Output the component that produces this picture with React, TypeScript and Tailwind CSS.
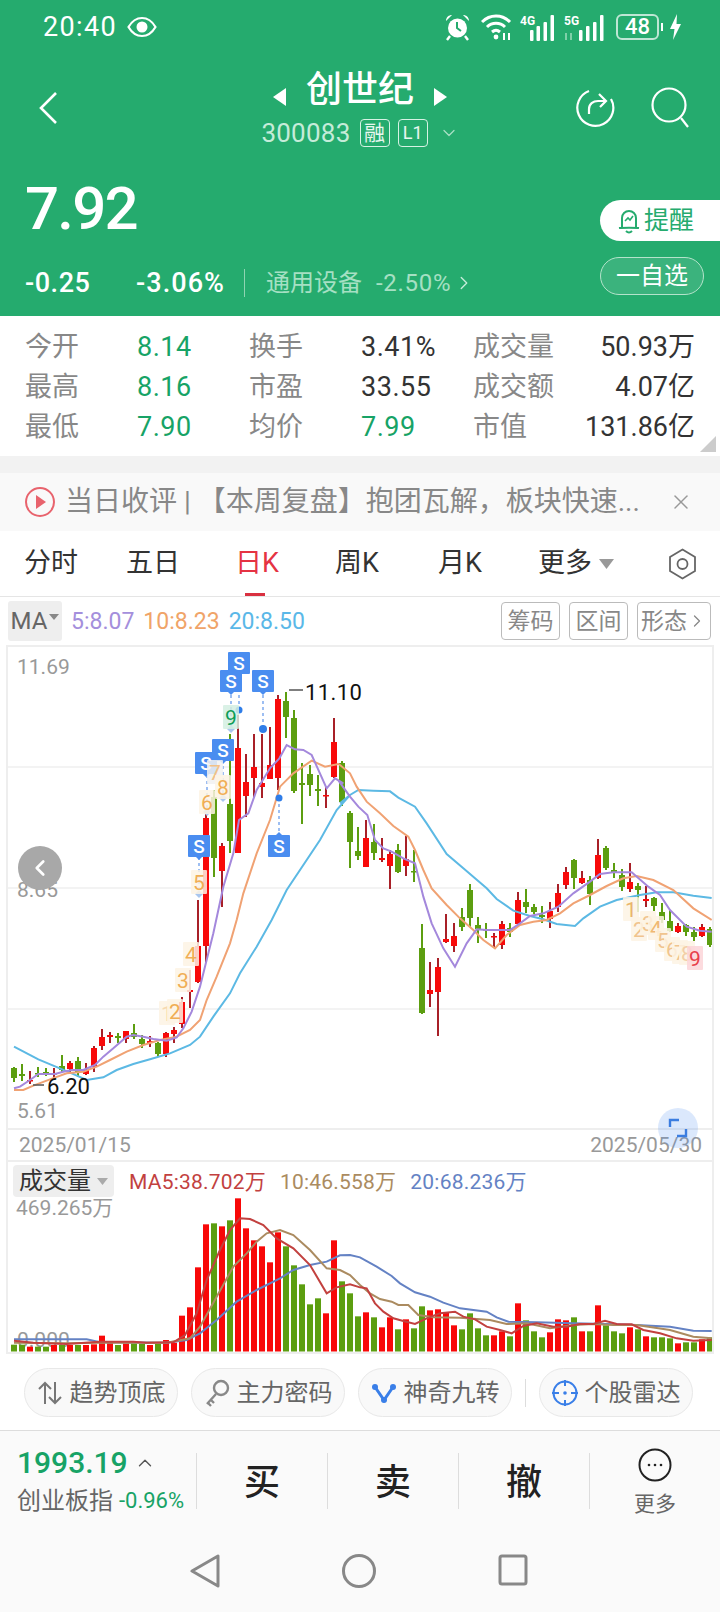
import { ChevronLeft, ChevronRight, ChevronDown, ChevronUp, X } from 'lucide-react'

type Pt = [number, number]

// bodyTop, bodyBottom, wickTop, wickBottom, r|g (page y, one candle every 8px)
type Candle = [number, number, number, number, 'r' | 'g']

const candles: Candle[] = [
  [1068, 1078, 1067, 1082, 'g'], [1074, 1076, 1064, 1081, 'g'], [1080, 1081, 1071, 1084, 'r'], [1073, 1074, 1067, 1077, 'g'],
  [1072, 1073, 1068, 1076, 'g'], [1073, 1074, 1068, 1078, 'r'], [1066, 1070, 1055, 1072, 'g'], [1063, 1069, 1061, 1073, 'r'],
  [1061, 1073, 1057, 1077, 'g'], [1070, 1074, 1063, 1075, 'r'], [1048, 1067, 1046, 1072, 'r'], [1037, 1046, 1029, 1050, 'r'],
  [1035, 1037, 1032, 1043, 'r'], [1036, 1038, 1033, 1043, 'g'], [1031, 1039, 1031, 1043, 'r'], [1033, 1037, 1024, 1039, 'g'],
  [1039, 1044, 1035, 1048, 'g'], [1041, 1043, 1036, 1047, 'r'], [1043, 1054, 1042, 1057, 'g'], [1033, 1054, 1032, 1057, 'r'],
  [1030, 1034, 1027, 1043, 'r'], [1002, 1024, 997, 1028, 'r'], [990, 992, 970, 1008, 'r'], [946, 982, 900, 983, 'r'],
  [818, 946, 812, 962, 'r'], [797, 858, 790, 877, 'g'], [846, 871, 843, 907, 'r'], [804, 841, 734, 853, 'g'],
  [748, 853, 715, 853, 'r'], [782, 796, 754, 817, 'r'], [767, 778, 734, 797, 'r'], [783, 787, 734, 798, 'r'],
  [765, 779, 727, 779, 'r'], [699, 778, 695, 790, 'r'], [701, 717, 692, 738, 'g'], [718, 791, 710, 793, 'g'],
  [783, 785, 763, 824, 'g'], [774, 785, 765, 796, 'g'], [789, 791, 775, 806, 'g'], [795, 796, 787, 808, 'r'],
  [742, 777, 718, 778, 'r'], [763, 802, 761, 806, 'g'], [813, 842, 811, 868, 'g'], [851, 856, 827, 860, 'g'],
  [838, 867, 820, 867, 'r'], [842, 853, 824, 860, 'g'], [858, 860, 838, 862, 'r'], [854, 866, 850, 889, 'r'],
  [850, 872, 844, 873, 'g'], [859, 866, 836, 876, 'r'], [871, 872, 850, 882, 'g'], [948, 1013, 924, 1014, 'g'],
  [990, 994, 962, 1007, 'r'], [967, 992, 958, 1036, 'r'], [939, 942, 914, 943, 'r'], [936, 946, 923, 952, 'r'],
  [917, 927, 908, 931, 'g'], [890, 918, 884, 927, 'g'], [925, 929, 917, 943, 'g'], [929, 930, 923, 938, 'g'],
  [936, 937, 933, 948, 'r'], [924, 945, 921, 949, 'r'], [928, 932, 923, 937, 'g'], [900, 924, 892, 925, 'r'],
  [902, 907, 889, 913, 'g'], [907, 912, 904, 914, 'g'], [915, 917, 906, 923, 'g'], [911, 919, 902, 928, 'r'],
  [893, 907, 884, 912, 'r'], [872, 885, 867, 889, 'r'], [860, 878, 859, 889, 'g'], [878, 883, 871, 884, 'r'],
  [880, 894, 876, 905, 'g'], [855, 878, 839, 879, 'r'], [848, 868, 846, 870, 'g'], [870, 872, 863, 878, 'g'],
  [875, 887, 869, 891, 'g'], [882, 889, 863, 892, 'r'], [886, 890, 883, 912, 'g'], [899, 901, 886, 907, 'r'],
  [898, 906, 897, 911, 'g'], [912, 920, 903, 923, 'g'], [921, 931, 910, 932, 'g'], [926, 932, 923, 933, 'r'],
  [925, 932, 924, 936, 'g'], [932, 937, 927, 941, 'g'], [927, 936, 924, 937, 'r'], [929, 945, 927, 947, 'g'],
]

// bar tops, as page y
const volumes: [number, 'r' | 'g'][] = (
  [
    [584, 'g'], [584, 'g'], [590, 'r'], [590, 'g'], [590, 'g'], [585, 'r'], [585, 'g'], [585, 'r'], [585, 'g'], [585, 'r'], [583, 'r'],
    [557, 'r'], [578, 'r'], [585, 'g'], [580, 'r'], [580, 'g'], [582, 'g'], [585, 'r'], [582, 'g'], [570, 'r'], [578, 'r'], [497, 'r'],
    [472, 'r'], [352, 'r'], [223, 'r'], [220, 'g'], [229, 'r'], [211, 'g'], [145, 'r'], [235, 'r'], [271, 'r'], [289, 'r'], [337, 'r'],
    [247, 'r'], [289, 'g'], [346, 'g'], [403, 'g'], [463, 'g'], [445, 'g'], [490, 'r'], [271, 'r'], [394, 'g'], [430, 'g'], [499, 'g'],
    [487, 'r'], [502, 'g'], [532, 'r'], [502, 'r'], [538, 'g'], [508, 'r'], [535, 'g'], [469, 'g'], [481, 'r'], [478, 'r'], [487, 'r'],
    [526, 'r'], [538, 'g'], [490, 'g'], [535, 'g'], [556, 'g'], [556, 'r'], [544, 'r'], [559, 'g'], [460, 'r'], [511, 'g'], [544, 'g'],
    [562, 'g'], [547, 'r'], [508, 'r'], [511, 'r'], [502, 'g'], [544, 'r'], [544, 'g'], [466, 'r'], [526, 'g'], [544, 'g'], [550, 'g'],
    [532, 'r'], [538, 'g'], [559, 'r'], [562, 'g'], [562, 'g'], [565, 'g'], [580, 'r'], [577, 'g'], [577, 'g'], [568, 'r'], [562, 'g'],
  ] as [number, 'r' | 'g'][]
).map(([v, c]) => [1150 + v / 3, c])

// crops of the picture were 3x, these bring the traced points back to page coordinates
const a = (ox: number, oy: number, pts: Pt[]) => pts.map(([x, y]) => `${ox + x / 3},${oy + y / 3}`).join(' ')

const ma5 = [
  a(0, 920, [[42, 505], [60, 500], [90, 480], [115, 462], [140, 462], [165, 462], [190, 455], [215, 450], [250, 450], [285, 435], [310, 410], [340, 385], [380, 350], [400, 345], [430, 350], [460, 357], [500, 362], [530, 352], [550, 325], [575, 275], [600, 200], [625, 100]]),
  a(0, 640, [[640, 880], [670, 740], [700, 640], [717, 540], [745, 520], [770, 450], [810, 385], [838, 355], [860, 315], [885, 328], [910, 330], [935, 345], [980, 445], [1005, 415], [1030, 430]]),
  a(340, 700, [[0, 248], [30, 290], [55, 320], [82, 345], [105, 420], [130, 445], [155, 455], [190, 475], [225, 490], [250, 590], [275, 670], [310, 745], [345, 800], [380, 730], [410, 688], [440, 690], [470, 690], [510, 690], [540, 670], [570, 648], [610, 640], [655, 620], [700, 580], [750, 545], [780, 522], [820, 517], [875, 517], [925, 560], [960, 585], [990, 630], [1040, 680], [1080, 692], [1115, 695]]),
].join(' ')
const ma10 = [
  a(0, 920, [[42, 510], [70, 510], [100, 497], [150, 478], [200, 460], [250, 455], [290, 440], [330, 420], [380, 395], [430, 375], [480, 360], [530, 350], [570, 330], [600, 300], [620, 240], [650, 170], [690, 70], [710, 0]]),
  a(0, 640, [[730, 760], [770, 640], [810, 540], [840, 440], [880, 400], [935, 362], [975, 380], [1015, 372]]),
  a(340, 700, [[0, 195], [30, 220], [50, 260], [80, 305], [120, 340], [160, 378], [205, 410], [225, 450], [250, 510], [275, 565], [320, 615], [360, 655], [400, 690], [430, 720], [465, 745], [500, 705], [540, 675], [580, 665], [620, 660], [660, 640], [700, 610], [750, 585], [800, 558], [850, 535], [890, 528], [940, 540], [1000, 570], [1060, 625], [1115, 660]]),
].join(' ')
const ma20 = [
  a(0, 920, [[42, 380], [115, 418], [210, 458], [260, 480], [310, 472], [350, 450], [400, 432], [450, 418], [510, 400], [570, 375], [600, 350], [640, 290], [690, 220], [720, 160], [770, 80], [815, 0]]),
  a(0, 640, [[860, 750], [960, 600], [1010, 510], [1050, 465]]),
  a(340, 700, [[0, 310], [30, 285], [55, 270], [100, 272], [150, 274], [175, 293], [225, 320], [260, 370], [320, 462], [370, 505], [440, 565], [470, 597], [520, 632], [570, 648], [610, 658], [650, 672], [705, 678], [730, 655], [780, 620], [830, 600], [900, 585], [950, 577], [1000, 577], [1060, 587], [1115, 594]]),
].join(' ')

const volMa5 = [
  a(0, 1150, [[42, 572], [100, 578], [200, 582], [300, 575], [400, 575], [440, 578], [520, 577], [555, 555], [590, 490], [620, 390], [660, 300], [690, 240], [720, 205], [750, 207], [790, 225], [830, 265], [880, 295], [930, 345], [980, 430], [1010, 412], [1050, 403]]),
  a(360, 1150, [[0, 412], [20, 415], [45, 460], [70, 485], [100, 505], [130, 513], [165, 522], [200, 505], [240, 490], [285, 485], [310, 500], [345, 508], [380, 530], [420, 540], [455, 550], [490, 528], [530, 520], [580, 530], [620, 530], [660, 522], [700, 522], [735, 512], [770, 522], [815, 523], [850, 540], [900, 550], [950, 565], [1000, 572], [1055, 570]]),
].join(' ')
const volMa10 = [
  a(0, 1150, [[42, 578], [200, 580], [300, 578], [500, 578], [570, 565], [600, 530], [650, 440], [700, 350], [740, 310], [770, 275], [800, 250], [840, 240], [880, 255], [930, 300], [980, 355], [1020, 360], [1050, 375]]),
  a(360, 1150, [[0, 405], [30, 430], [60, 447], [95, 455], [115, 465], [145, 465], [175, 495], [220, 502], [300, 503], [390, 510], [440, 522], [500, 520], [570, 535], [640, 525], [700, 522], [760, 525], [830, 525], [930, 540], [1000, 560], [1055, 565]]),
].join(' ')
const volMa20 = [
  a(0, 1150, [[42, 568], [260, 568], [300, 577], [500, 578], [560, 570], [600, 550], [650, 510], [710, 455], [770, 420], [840, 385], [880, 360], [930, 345], [980, 335], [1020, 316], [1050, 315]]),
  a(360, 1150, [[0, 322], [50, 350], [95, 378], [120, 400], [165, 427], [210, 440], [250, 458], [300, 475], [380, 485], [410, 502], [445, 515], [530, 517], [640, 520], [740, 522], [830, 525], [930, 530], [1000, 542], [1055, 543]]),
].join(' ')

const SBadge = ({ x, y, up }: { x: number; y: number; up?: boolean }) => (
  <g>
    <path
      d={up ? `M${x - 3} ${y - 11}L${x} ${y - 14}L${x + 3} ${y - 11}Z` : `M${x - 3} ${y + 11}L${x} ${y + 14}L${x + 3} ${y + 11}Z`}
      fill="#4a8df0"
    />
    <rect x={x - 11} y={y - 11} width={22} height={22} rx={1} fill="#4a8df0" />
    <text x={x} y={y + 6.5} textAnchor="middle" fontSize={19} fontWeight={500} fill="#fff">
      S
    </text>
  </g>
)

const Digit = ({ x, y, d, c = '#f0ae55', bg = '#fdf3e4' }: { x: number; y: number; d: string; c?: string; bg?: string }) => (
  <g>
    <rect x={x - 8} y={y - 12} width={16} height={24} rx={1} fill={bg} fillOpacity={0.85} />
    <text x={x} y={y + 8} textAnchor="middle" fontSize={21} fill={c}>
      {d}
    </text>
  </g>
)

const Diamond = ({ x, y }: { x: number; y: number }) => (
  <path d={`M${x - 4} ${y}L${x} ${y - 4}L${x + 4} ${y}L${x} ${y + 4}Z`} fill="#a9c6ee" />
)

const PriceChart = () => (
  <svg width={704} height={481} viewBox="8 647 704 481" className="block">
    {[767, 888, 1009].map((y) => (
      <line key={y} x1={8} x2={712} y1={y} y2={y} stroke="#f3f3f3" strokeWidth={2} />
    ))}
    <text x={17} y={674} fontSize={21} fill="#999">11.69</text>
    <text x={17} y={897} fontSize={21} fill="#999">8.65</text>
    <text x={17} y={1118} fontSize={21} fill="#999">5.61</text>

    {candles.map(([top, bottom, hi, lo, c], i) => {
      const x = 14 + 8 * i
      return (
        <g key={i}>
          <rect x={x - 1} y={hi} width={2} height={lo - hi} fill={c === 'r' ? '#a82028' : '#5c9e10'} />
          <rect x={x - 3} y={top} width={6} height={Math.max(bottom - top, 1.5)} fill={c === 'r' ? '#f80a0a' : '#5c9e10'} />
        </g>
      )
    })}

    <polyline points={ma20} fill="none" stroke="#5cb9e4" strokeWidth={2} />
    <polyline points={ma10} fill="none" stroke="#f0a273" strokeWidth={2} />
    <polyline points={ma5} fill="none" stroke="#a488dc" strokeWidth={2} />

    <line x1={289} x2={303} y1={690} y2={690} stroke="#555" strokeWidth={1.5} />
    <text x={305} y={700} fontSize={22} fill="#111" letterSpacing={0.4}>11.10</text>
    <line x1={33} x2={44} y1={1085} y2={1085} stroke="#555" strokeWidth={1.5} />
    <text x={47} y={1094} fontSize={22} fill="#111">6.20</text>

    {[[199, 857, 894], [207, 775, 812], [223, 760, 798], [231, 695, 729], [239, 677, 710], [263, 695, 729], [279, 798, 832]].map(([x, y1, y2]) => (
      <line key={x} x1={x} x2={x} y1={y1} y2={y2} stroke="#7ea9ee" strokeWidth={1.5} strokeDasharray="3 3" />
    ))}
    <Diamond x={199} y={894} />
    <Diamond x={207} y={812} />
    <Diamond x={223} y={798} />
    <Diamond x={231} y={729} />
    <circle cx={239} cy={710} r={3.5} fill="#2f7de8" />
    <circle cx={263} cy={729} r={4} fill="#2f7de8" />
    <circle cx={279} cy={798} r={3.5} fill="#2f7de8" />

    <Digit x={199} y={882} d="5" />
    <Digit x={207} y={802} d="6" />
    <SBadge x={206} y={763} />
    <SBadge x={223} y={750} />
    <Digit x={215} y={772} d="7" c="#f2c187" bg="#f1f1f1" />
    <Digit x={223} y={787} d="8" />
    <Digit x={231} y={717} d="9" c="#0f9d58" bg="#d4efe2" />
    <SBadge x={199} y={846} />
    <SBadge x={231} y={681} />
    <SBadge x={239} y={663} />
    <SBadge x={263} y={681} />
    <SBadge x={279} y={846} up />

    <Digit x={167} y={1013} d="1" c="#f7d9b0" />
    <Digit x={175} y={1011} d="2" />
    <Digit x={183} y={980} d="3" />
    <Digit x={191} y={954} d="4" />

    <Digit x={631} y={909} d="1" c="#e9b56c" />
    <Digit x={639} y={929} d="2" c="#f0c48e" />
    <Digit x={648} y={923} d="3" c="#f0c48e" />
    <Digit x={656} y={928} d="4" c="#f0b873" />
    <Digit x={663} y={940} d="5" c="#f0c48e" />
    <Digit x={672} y={949} d="6" c="#f0c48e" />
    <Digit x={680} y={952} d="7" c="#f0c48e" />
    <Digit x={687} y={953} d="8" c="#f3cfa6" />
    <Digit x={695} y={958} d="9" c="#e8404a" bg="#fcd5d8" />
  </svg>
)

const VolumeChart = () => (
  <svg width={704} height={190} viewBox="8 1162 704 190" className="block">
    <text x={17} y={1347} fontSize={21} fill="#999">0.000</text>
    {volumes.map(([top, c], i) => (
      <rect key={i} x={11 + 8 * i} y={top} width={6} height={1351.5 - top} fill={c === 'r' ? '#f80808' : '#5c9e10'} />
    ))}
    <polyline points={volMa20} fill="none" stroke="#6482c4" strokeWidth={2} />
    <polyline points={volMa10} fill="none" stroke="#ab8b60" strokeWidth={2} />
    <polyline points={volMa5} fill="none" stroke="#c2413f" strokeWidth={2} />
  </svg>
)

const stats = [
  ['今开', '8.14', '换手', '3.41%', '成交量', '50.93万'],
  ['最高', '8.16', '市盈', '33.55', '成交额', '4.07亿'],
  ['最低', '7.90', '均价', '7.99', '市值', '131.86亿'],
]

const Pill = ({ icon, label }: { icon: React.ReactNode; label: string }) => (
  <div className="flex h-[49px] w-[154px] items-center justify-center gap-[7px] rounded-full border border-[#e8e8e8] bg-[#f9f9f9] text-[24px] text-[#666]">
    {icon}
    <span>{label}</span>
  </div>
)

export default function App() {
  return (
    <div className="flex h-[1612px] w-[720px] flex-col overflow-hidden bg-white [font-family:Roboto,'Noto_Sans_CJK_SC',sans-serif]">
      <header className="flex h-[316px] flex-col bg-[#25ab6e] text-white">
        {/* status bar */}
        <div className="flex h-[54px] items-center justify-between pl-[43px] pr-[38px]">
          <div className="flex items-center gap-[10px]">
            <span className="text-[27px] tracking-[0.05em]">20:40</span>
            <svg width="30" height="22" viewBox="0 0 30 22" fill="none">
              <path d="M1.5 11C5 5 10 2 15 2s10 3 13.5 9C25 17 20 20 15 20S5 17 1.5 11Z" stroke="#fff" strokeWidth="2.2" />
              <circle cx="15" cy="11" r="5.5" fill="#fff" />
            </svg>
          </div>
          <div className="flex items-center">
            <svg width="27" height="28" viewBox="0 0 27 28" fill="#fff">
              <circle cx="13.5" cy="15" r="9.5" />
              <path d="M13 9v6l4 3" stroke="#25ab6e" strokeWidth="2" fill="none" />
              <path d="M2 8c0-4 3-6 6-6zM25 8c0-4-3-6-6-6z" />
              <path d="M6 23l-3 4M21 23l3 4" stroke="#fff" strokeWidth="2.4" />
            </svg>
            <svg className="ml-[10px]" width="32" height="28" viewBox="0 0 32 28" fill="none" stroke="#fff" strokeWidth="3">
              <path d="M1 9c8-8 20-8 28 0" />
              <path d="M6 14c5-5 13-5 18 0" />
              <path d="M11 19c3-2.500 5-2.500 8 0" />
              <circle cx="15" cy="24" r="2.400" fill="#fff" stroke="none" />
              <path d="M23 20v7M28 20v7" strokeWidth="2" />
            </svg>
            <svg className="ml-[7px]" width="38" height="28" viewBox="0 0 38 28" fill="#fff">
              <text x="0" y="12" fontSize="12" fontWeight="700">4G</text>
              <rect x="10" y="17" width="3.500" height="11" rx="1" />
              <rect x="16.500" y="13" width="3.500" height="15" rx="1" />
              <rect x="23.500" y="9" width="3.500" height="19" rx="1" />
              <rect x="30.500" y="2" width="3.500" height="26" rx="1" />
            </svg>
            <svg className="ml-[6px]" width="44" height="28" viewBox="0 0 44 28" fill="#fff">
              <text x="0" y="12" fontSize="12" fontWeight="700">5G</text>
              <path d="M2 20v7M7 20v7" stroke="#7fd0a8" strokeWidth="2" />
              <rect x="15" y="17" width="3.500" height="11" rx="1" />
              <rect x="22" y="13" width="3.500" height="15" rx="1" />
              <rect x="29" y="9" width="3.500" height="19" rx="1" />
              <rect x="36" y="2" width="3.500" height="26" rx="1" />
            </svg>
            <div className="ml-[8px] flex h-[26px] w-[43px] items-center justify-center rounded-[6px] border-2 border-white/70 text-[22px] font-medium leading-none">
              48
            </div>
            <div className="ml-[2px] h-[8px] w-[2px] bg-white" />
            <svg className="ml-[6px]" width="13" height="28" viewBox="0 0 13 28" fill="#fff">
              <path d="M8 1 1 16h4.500L4 27l8-16H7.500Z" />
            </svg>
          </div>
        </div>

        {/* name row */}
        <div className="flex h-[116px]">
          <div className="w-[170px] pl-[38px] pt-[37px]">
            <svg width="20" height="34" viewBox="0 0 20 34" fill="none" stroke="#fff" strokeWidth="2.600">
              <path d="M18 2 3 17l15 15" />
            </svg>
          </div>
          <div className="flex flex-1 flex-col items-center">
            <div className="mt-[16px] flex h-[40px] items-center gap-[20px]">
              <svg className="mt-[14px]" width="13" height="18" viewBox="0 0 13 18" fill="#fff">
                <path d="M13 0v18L0 9Z" />
              </svg>
              <span className="text-[36px] font-medium leading-[40px]">创世纪</span>
              <svg className="mt-[14px]" width="13" height="18" viewBox="0 0 13 18" fill="#fff">
                <path d="M0 0v18l13-9Z" />
              </svg>
            </div>
            <div className="mt-[8px] flex h-[30px] items-center text-[#c5ecd9]">
              <span className="text-[26px] leading-none tracking-[0.01em]">300083</span>
              <span className="ml-[9px] flex h-[28px] w-[30px] items-center justify-center rounded-[4px] border border-[#d6f2e4] text-[21px] leading-none text-white/90">融</span>
              <span className="ml-[8px] flex h-[28px] w-[30px] items-center justify-center rounded-[4px] border border-[#d6f2e4] text-[18px] leading-none text-white/90">L1</span>
              <ChevronDown className="ml-[11px]" size={20} strokeWidth={1.5} color="#a8e0c4" />
            </div>
          </div>
          <div className="flex w-[170px] items-start justify-end gap-[36px] pr-[29px] pt-[33px]">
            <svg width="40" height="42" viewBox="0 0 40 42" fill="none" stroke="#fff" strokeWidth="2.200">
              <path d="M14 4a18 18 0 1 0 22 8" />
              <path d="M14 27v-5c0-5 4-8 9-8h7" />
              <path d="M24 7l7 7-6 6" />
            </svg>
            <svg width="40" height="42" viewBox="0 0 40 42" fill="none" stroke="#fff" strokeWidth="2.200">
              <circle cx="18" cy="18" r="16.500" />
              <path d="M30 31l7 9" />
            </svg>
          </div>
        </div>

        {/* price */}
        <div className="flex flex-1 justify-between">
          <div className="pl-[25px]">
            <div className="mt-[9px] h-[60px] text-[60px] font-medium leading-[60px] tracking-[-0.03em]">7.92</div>
            <div className="mt-[28px] flex h-[32px] items-center">
              <span className="w-[111px] text-[27px] font-medium leading-none tracking-[0.02em]">-0.25</span>
              <span className="w-[86px] text-[27px] font-medium leading-none tracking-[0.04em]">-3.06%</span>
              <div className="ml-[22px] h-[28px] w-px bg-[#8fd4b2]" />
              <span className="ml-[21px] text-[24px] leading-none text-[#a5e0c3]">通用设备</span>
              <span className="ml-[14px] text-[24px] leading-none tracking-[0.03em] text-[#a5e0c3]">-2.50%</span>
              <ChevronRight className="ml-[2px]" size={22} strokeWidth={1.5} color="#c5ecd9" />
            </div>
          </div>
          <div className="flex flex-col items-end">
            <div className="mt-[30px] flex h-[41px] w-[120px] items-center gap-[4px] rounded-l-full bg-white pl-[18px] text-[25px] text-[#25ab6e]">
              <svg width="22" height="28" viewBox="0 0 22 28" fill="none" stroke="#25ab6e" strokeWidth="2">
                <path d="M4 20V11a7 7 0 0 1 14 0v9" />
                <path d="M1 21c3-.5 17-.5 20 0" />
                <path d="M8 24c2 2 4 2 6 0" />
                <path d="M7 14l3-3 2 2 3-4" strokeWidth="1.600" />
              </svg>
              <span className="leading-none">提醒</span>
            </div>
            <div className="mr-[16px] mt-[16px] flex h-[38px] w-[104px] items-center justify-center rounded-full border border-[#b4e3cb] bg-white/10 text-[24px] leading-none">
              一自选
            </div>
          </div>
        </div>
      </header>

      {/* quote stats */}
      <section className="relative h-[140px] pl-[25px] pt-[11px]">
        {stats.map((row) => (
          <div key={row[0]} className="grid h-[40px] grid-cols-[112px_112px_112px_112px_112px_110px] items-center text-[27px] leading-none">
            <span className="text-[#888]">{row[0]}</span>
            <span className="text-[#17a366] tracking-[0.02em]">{row[1]}</span>
            <span className="text-[#888]">{row[2]}</span>
            <span className={row[3] === '7.99' ? 'text-[#17a366] tracking-[0.02em]' : 'text-[#333] tracking-[0.02em]'}>{row[3]}</span>
            <span className="text-[#888]">{row[4]}</span>
            <span className="whitespace-nowrap text-right text-[#333]">{row[5]}</span>
          </div>
        ))}
        <svg className="absolute bottom-[4px] right-[4px]" width="16" height="16" viewBox="0 0 16 16" fill="#ccc">
          <path d="M16 0v16H0Z" />
        </svg>
      </section>
      <div className="h-[17px] bg-[#f2f2f2]" />

      {/* news strip */}
      <div className="flex h-[58px] items-center bg-[#f9f9f9] pl-[25px] pr-[27px]">
        <svg width="30" height="32" viewBox="0 0 30 32" fill="none">
          <circle cx="15" cy="16" r="14" stroke="#e8636d" strokeWidth="2" />
          <path d="M11 9l10 7-10 7Z" fill="#e8636d" />
        </svg>
        <span className="ml-[10px] flex-1 whitespace-nowrap text-[28px] leading-none text-[#888]">当日收评 | 【本周复盘】抱团瓦解，板块快速...</span>
        <X size={24} strokeWidth={1.5} color="#999" />
      </div>

      {/* period tabs */}
      <div className="flex h-[66px] items-center border-b border-[#e5e5e5] pl-[24px] text-[27px] leading-none text-[#333]">
        <span className="w-[102px]">分时</span>
        <span className="w-[109px]">五日</span>
        <span className="relative w-[100px] text-[#e53343]">
          日K
          <span className="absolute left-[10px] top-[43px] h-[3px] w-[20px] bg-[#d93040]" />
        </span>
        <span className="w-[103px]">周K</span>
        <span className="w-[100px]">月K</span>
        <span className="flex w-[130px] items-center gap-[7px]">
          更多
          <svg width="15" height="10" viewBox="0 0 15 10" fill="#999">
            <path d="M0 0h15L7.500 10Z" />
          </svg>
        </span>
        <svg width="29" height="32" viewBox="0 0 29 32" fill="none" stroke="#666" strokeWidth="1.800">
          <path d="M14.500 1.500 27 9v14l-12.500 7.500L2 23V9Z" />
          <circle cx="14.500" cy="16" r="5" />
        </svg>
      </div>

      {/* MA legend */}
      <div className="flex h-[48px] items-center pl-[8px] pr-[9px]">
        <div className="flex h-[40px] w-[54px] items-center justify-center gap-[2px] rounded-[3px] bg-[#eee] text-[24px] leading-none text-[#666]">
          MA
          <svg className="mb-[8px]" width="10" height="6" viewBox="0 0 10 6" fill="#888">
            <path d="M0 0h10L5 6Z" />
          </svg>
        </div>
        <span className="ml-[9px] text-[23px] leading-none text-[#a48fdc]">5:8.07</span>
        <span className="ml-[9px] text-[23px] leading-none text-[#f0a468]">10:8.23</span>
        <span className="ml-[9px] text-[23px] leading-none text-[#5ab8e8]">20:8.50</span>
        <div className="ml-auto flex gap-[9px] text-[23px] leading-none text-[#888]">
          <span className="flex h-[38px] w-[59px] items-center justify-center rounded-[4px] border border-[#bbb]">筹码</span>
          <span className="flex h-[38px] w-[59px] items-center justify-center rounded-[4px] border border-[#bbb]">区间</span>
          <span className="flex h-[38px] w-[74px] items-center justify-center rounded-[4px] border border-[#bbb]">
            形态
            <ChevronRight size={20} strokeWidth={1.5} />
          </span>
        </div>
      </div>

      {/* charts */}
      <div className="relative mx-[6px] h-[709px] border-2 border-[#eee]">
        <div className="h-[483px] border-b-2 border-[#eee]">
          <PriceChart />
        </div>
        <div className="flex h-[32px] items-center justify-between border-b-2 border-[#eee] pl-[11px] pr-[10px] text-[21px] leading-none text-[#999]">
          <span>2025/01/15</span>
          <span>2025/05/30</span>
        </div>
        <div className="relative">
          <VolumeChart />
          <div className="absolute left-0 top-0 flex w-full items-start pl-[5px] pt-[3px]">
            <div className="flex h-[32px] w-[101px] items-center gap-[6px] rounded-[4px] bg-[#eee] pl-[6px] text-[24px] leading-none text-[#333]">
              成交量
              <svg width="11" height="7" viewBox="0 0 11 7" fill="#aaa">
                <path d="M0 0h11L5.500 7Z" />
              </svg>
            </div>
            <div className="ml-[15px] mt-[7px] flex gap-[14px] whitespace-nowrap text-[21px] leading-none tracking-[0.01em]">
              <span className="text-[#c2413f]">MA5:38.702万</span>
              <span className="text-[#ab8b60]">10:46.558万</span>
              <span className="text-[#6482c4]">20:68.236万</span>
            </div>
          </div>
          <div className="absolute left-[8px] top-[36px] text-[21px] leading-none text-[#999]">469.265万</div>
        </div>

        <button className="absolute left-[10px] top-[199px] flex h-[44px] w-[44px] items-center justify-center rounded-full bg-[#a8a8a8] text-white">
          <ChevronLeft size={26} strokeWidth={2.5} />
        </button>
        <div className="absolute left-[650px] top-[461px] flex h-[40px] w-[40px] items-center justify-center rounded-full bg-[#4a8df0]/20">
          <svg width="20" height="20" viewBox="0 0 20 20" fill="none" stroke="#3b7de0" strokeWidth="2.400">
            <path d="M2 9V2h9" />
            <path d="M18 11v7H9" />
          </svg>
        </div>
      </div>

      {/* indicator pills */}
      <div className="flex h-[77px] items-start gap-[13px] border-b border-[#ddd] pl-[24px] pt-[14px]">
        <Pill
          label="趋势顶底"
          icon={
            <svg width="26" height="26" viewBox="0 0 26 26" fill="none" stroke="#777" strokeWidth="2">
              <path d="M8 24V3M2 9l6-6 6 6" />
              <path d="M18 2v21M12 17l6 6 6-6" />
            </svg>
          }
        />
        <Pill
          label="主力密码"
          icon={
            <svg width="26" height="28" viewBox="0 0 26 28" fill="none" stroke="#888" strokeWidth="2.400">
              <circle cx="17" cy="9" r="7" />
              <path d="M12 15 3 25M7 21l3 3M4 24l3 3" />
            </svg>
          }
        />
        <Pill
          label="神奇九转"
          icon={
            <svg width="26" height="22" viewBox="0 0 26 22" fill="none" stroke="#3a7fe8" strokeWidth="3">
              <path d="M4 5l9 13 9-13" />
              <circle cx="4" cy="5" r="3" fill="#3a7fe8" stroke="none" />
              <circle cx="13" cy="18" r="3" fill="#3a7fe8" stroke="none" />
              <circle cx="22" cy="5" r="3" fill="#3a7fe8" stroke="none" />
            </svg>
          }
        />
        <div className="mt-[11px] h-[28px] w-[1px] bg-[#ddd]" />
        <Pill
          label="个股雷达"
          icon={
            <svg width="26" height="28" viewBox="0 0 26 28" fill="none" stroke="#3a7fe8" strokeWidth="2">
              <circle cx="13" cy="14" r="11.500" />
              <path d="M13 1v6M13 21v6M0 14h7M19 14h7" />
              <circle cx="13" cy="14" r="1.800" fill="#3a7fe8" stroke="none" />
            </svg>
          }
        />
      </div>

      {/* trade bar */}
      <div className="flex h-[98px] bg-[#fafafa]">
        <div className="w-[196px] pl-[17px]">
          <div className="mt-[15px] flex h-[34px] items-center text-[30px] font-medium leading-none text-[#17a366]">
            1993.19
            <ChevronUp className="ml-[6px]" size={22} strokeWidth={1.5} color="#555" />
          </div>
          <div className="mt-[4px] flex h-[34px] items-center">
            <span className="text-[24px] leading-none text-[#666]">创业板指</span>
            <span className="ml-[6px] text-[22px] leading-none text-[#17a366]">-0.96%</span>
          </div>
        </div>
        {['买', '卖', '撤'].map((t) => (
          <div key={t} className="mt-[22px] flex h-[56px] w-[131px] items-center justify-center self-start border-l border-[#ddd] pt-[4px] text-[36px] font-medium leading-none text-[#222]">
            {t}
          </div>
        ))}
        <div className="mt-[22px] h-[56px] w-px bg-[#ddd]" />
        <div className="flex flex-1 flex-col items-center pt-[17px]">
          <svg width="34" height="34" viewBox="0 0 34 34" fill="none">
            <circle cx="17" cy="17" r="15.500" stroke="#222" strokeWidth="2" />
            <circle cx="11" cy="17" r="1.300" fill="#222" />
            <circle cx="17" cy="17" r="1.300" fill="#222" />
            <circle cx="23" cy="17" r="1.300" fill="#222" />
          </svg>
          <span className="mt-[12px] text-[21px] leading-none text-[#666]">更多</span>
        </div>
      </div>

      {/* android nav */}
      <div className="flex flex-1 items-start justify-center gap-[122px] bg-[#fafafa] pt-[25px] pr-[2px]">
        <svg width="30" height="34" viewBox="0 0 30 34" fill="none" stroke="#888" strokeWidth="3" strokeLinejoin="round">
          <path d="M28 2v30L2 17Z" />
        </svg>
        <svg width="34" height="34" viewBox="0 0 34 34" fill="none" stroke="#888" strokeWidth="3">
          <circle cx="17" cy="17" r="15.500" />
        </svg>
        <svg width="30" height="32" viewBox="0 0 30 32" fill="none" stroke="#888" strokeWidth="3">
          <rect x="2" y="2" width="26" height="28" rx="2" />
        </svg>
      </div>
    </div>
  )
}
